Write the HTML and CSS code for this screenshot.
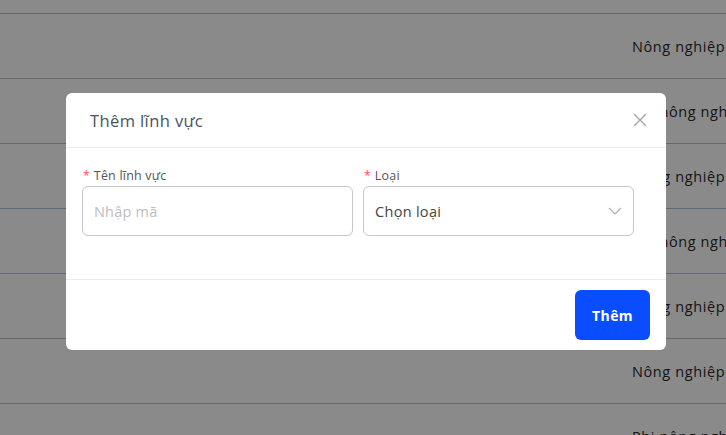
FILE: index.html
```html
<!DOCTYPE html>
<html lang="vi">
<head>
<meta charset="utf-8">
<link rel="stylesheet" href="styles.css">
</head>
<body>
<div class="page">
  <div class="row"><span class="cell">Nông nghiệp</span></div>
  <div class="row"><span class="cell">Phi nông nghiệp</span></div>
  <div class="row"><span class="cell">Nông nghiệp</span></div>
  <div class="row"><span class="cell">Phi nông nghiệp</span></div>
  <div class="row"><span class="cell">Nông nghiệp</span></div>
  <div class="row"><span class="cell">Nông nghiệp</span></div>
  <div class="row"><span class="cell">Phi nông nghiệp</span></div>
</div>
<div class="overlay">
  <div class="modal">
    <div class="modal-header">
      <span class="modal-title">Thêm lĩnh vực</span>
      <svg class="close" width="16" height="16" viewBox="0 0 16 16"><path d="M2 2L14 14M14 2L2 14" stroke="#a6a6a6" stroke-width="1.4" fill="none"/></svg>
    </div>
    <div class="modal-body">
      <div class="field">
        <label class="label"><span class="req">*</span>Tên lĩnh vực</label>
        <div class="input"><span class="placeholder">Nhập mã</span></div>
      </div>
      <div class="field">
        <label class="label"><span class="req">*</span>Loại</label>
        <div class="input select"><span class="value">Chọn loại</span>
          <svg width="14" height="10" viewBox="0 0 14 10"><path d="M1 2L7 8L13 2" stroke="#b0b0b0" stroke-width="1.2" fill="none"/></svg>
        </div>
      </div>
    </div>
    <div class="modal-footer">
      <button class="btn">Thêm</button>
    </div>
  </div>
</div>
</body>
</html>
```
FILE: styles.css
```css
html, body {
  margin: 0;
  padding: 0;
  width: 726px;
  height: 435px;
  overflow: hidden;
  background: #fff;
  font-family: "Open Sans", "Liberation Sans", sans-serif;
}
.page {
  padding-top: 13px;
}
.row {
  height: 64px;
  border-top: 1px solid #b0c4d8;
  display: flex;
  align-items: center;
  padding-left: 632px;
  white-space: nowrap;
  overflow: hidden;
}
.cell {
  font-size: 14.5px;
  letter-spacing: 0.6px;
  color: #2a2a2a;
}
.overlay {
  position: fixed;
  inset: 0;
  background: rgba(0, 0, 0, 0.46);
  display: flex;
  align-items: flex-start;
  padding: 93px 0 0 66px;
}
.modal {
  width: 600px;
  background: #fff;
  border-radius: 6px;
}
.modal-header {
  height: 54px;
  border-bottom: 1px solid #ececec;
  display: flex;
  align-items: center;
  justify-content: space-between;
  padding: 0 18px 0 24px;
}
.modal-title {
  font-size: 16.5px;
  letter-spacing: 0.4px;
  color: #4a5260;
}
.modal-body {
  display: grid;
  grid-template-columns: 271px 271px;
  column-gap: 10px;
  padding: 18px 32px 43px 16px;
}
.label {
  display: flex;
  align-items: center;
  gap: 4px;
  font-size: 12.5px;
  letter-spacing: 0.2px;
  color: #555;
  height: 18px;
  margin-bottom: 2px;
  padding-left: 1px;
}
.req {
  color: #ff4d4f;
  font-size: 12px;
}
.input {
  height: 48px;
  border: 1px solid #c6c6cc;
  border-radius: 6px;
  display: flex;
  align-items: center;
  justify-content: space-between;
  padding: 0 11px 0 11px;
}
.placeholder {
  font-size: 14.5px;
  letter-spacing: 0.2px;
  color: #bdbdbd;
}
.value {
  font-size: 14.5px;
  letter-spacing: 0.3px;
  color: #444;
}
.modal-footer {
  border-top: 1px solid #ececec;
  display: flex;
  justify-content: flex-end;
  padding: 10px 16px 10px;
}
.btn {
  width: 75px;
  height: 50px;
  border: none;
  border-radius: 6px;
  background: #0a4dff;
  color: #fff;
  font-family: "Open Sans", "Liberation Sans", sans-serif;
  font-weight: 700;
  font-size: 14px;
  letter-spacing: 0.4px;
}
```
